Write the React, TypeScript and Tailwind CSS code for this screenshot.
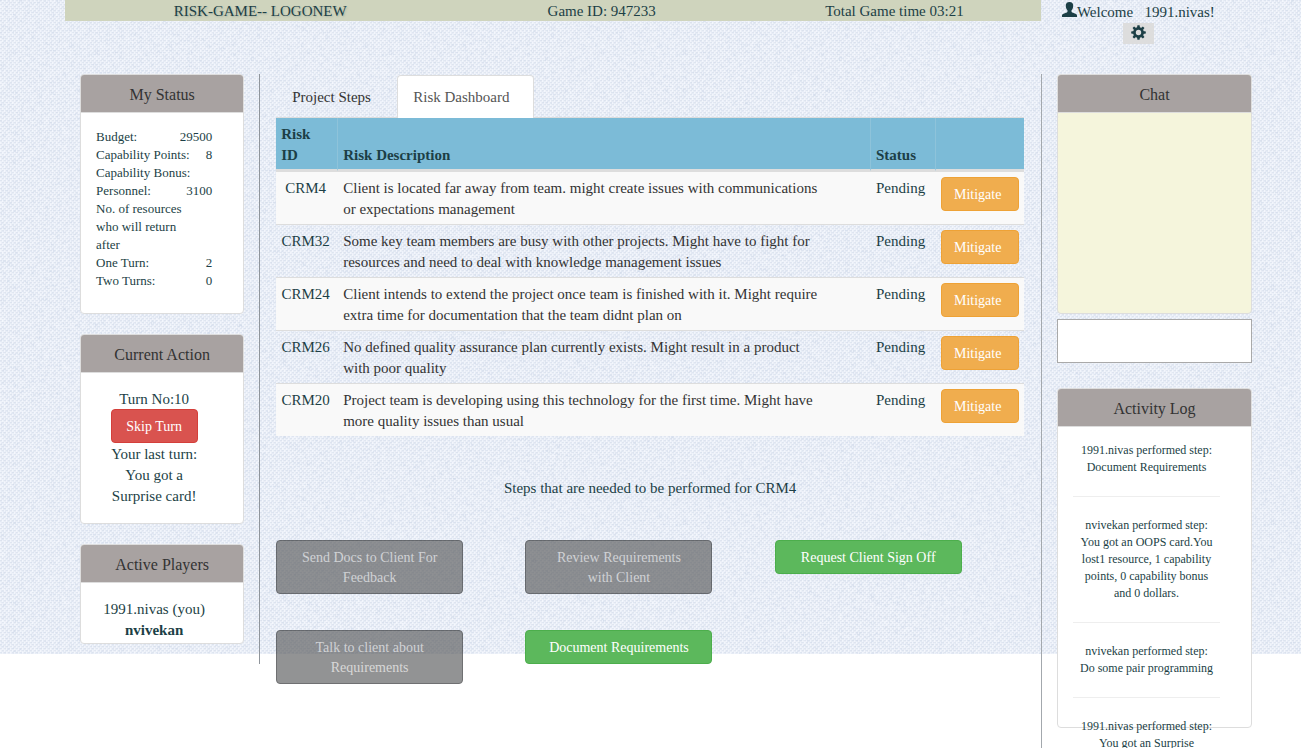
import type { ReactNode } from "react";

const risks: { id: string; lines: [string, string] }[] = [
  { id: "CRM4", lines: ["Client is located far away from team. might create issues with communications", "or expectations management"] },
  { id: "CRM32", lines: ["Some key team members are busy with other projects. Might have to fight for", "resources and need to deal with knowledge management issues"] },
  { id: "CRM24", lines: ["Client intends to extend the project once team is finished with it. Might require", "extra time for documentation that the team didnt plan on"] },
  { id: "CRM26", lines: ["No defined quality assurance plan currently exists. Might result in a product", "with poor quality"] },
  { id: "CRM20", lines: ["Project team is developing using this technology for the first time. Might have", "more quality issues than usual"] },
];

const steps: { lines: string[]; enabled: boolean }[] = [
  { lines: ["Send Docs to Client For", "Feedback"], enabled: false },
  { lines: ["Review Requirements", "with Client"], enabled: false },
  { lines: ["Request Client Sign Off"], enabled: true },
  { lines: ["Talk to client about", "Requirements"], enabled: false },
  { lines: ["Document Requirements"], enabled: true },
];

const log: string[][] = [
  ["1991.nivas performed step:", "Document Requirements"],
  ["nvivekan performed step:", "You got an OOPS card.You", "lost1 resource, 1 capability", "points, 0 capability bonus", "and 0 dollars."],
  ["nvivekan performed step:", "Do some pair programming"],
  ["1991.nivas performed step:", "You got an Surprise"],
];

function Lines({ lines }: { lines: string[] }) {
  return (
    <>
      {lines.map((line) => (
        <span key={line} className="block whitespace-nowrap">{line}</span>
      ))}
    </>
  );
}

function Linen() {
  return (
    <svg aria-hidden="true" className="absolute inset-x-0 top-0 -z-10 h-[654px] w-full">
      <defs>
        <filter id="weave" x="0" y="0" width="100%" height="100%" colorInterpolationFilters="sRGB">
          <feTurbulence type="fractalNoise" baseFrequency="0.16 0.5" numOctaves="2" seed="4" result="across" />
          <feColorMatrix in="across" type="matrix" values="0 0 0 0 0.76  0 0 0 0 0.81  0 0 0 0 0.89  1.2 0 0 0 -0.5" result="a" />
          <feTurbulence type="fractalNoise" baseFrequency="0.5 0.16" numOctaves="2" seed="9" result="down" />
          <feColorMatrix in="down" type="matrix" values="0 0 0 0 0.97  0 0 0 0 0.98  0 0 0 0 1  1.2 0 0 0 -0.4" result="b" />
          <feMerge>
            <feMergeNode in="a" />
            <feMergeNode in="b" />
          </feMerge>
        </filter>
        <pattern id="threads" width="4" height="4" patternUnits="userSpaceOnUse">
          <path d="M0 0H2V1H0ZM2 2H4V3H2Z" fill="#d3dbe9" fillOpacity="0.5" />
          <path d="M2 0H3V2H2ZM0 2H1V4H0Z" fill="#f8faff" fillOpacity="0.6" />
        </pattern>
        <pattern id="linen" width="294" height="235" patternUnits="userSpaceOnUse">
          <rect width="294" height="235" fill="#e8edf6" />
          <rect width="294" height="235" filter="url(#weave)" />
        </pattern>
      </defs>
      <rect width="100%" height="100%" fill="url(#linen)" />
      <rect width="100%" height="100%" fill="url(#threads)" />
    </svg>
  );
}

function UserIcon() {
  return (
    <svg aria-hidden="true" viewBox="0 0 15 15" className="h-[15px] w-[15px] fill-[#1c3f46]">
      <path d="M7.5 0C10 0 11.3 1.6 11.2 3.9 11.1 6 10.3 7.4 9.5 8.3V9.6C9.5 10.3 10.4 10.7 12.2 11.3 14.2 12 15 12.4 15 13.6V15H0V13.6C0 12.4.8 12 2.8 11.3 4.6 10.7 5.5 10.3 5.5 9.6V8.3C4.7 7.4 3.9 6 3.8 3.9 3.7 1.6 5 0 7.5 0Z" />
    </svg>
  );
}

function CogIcon() {
  return (
    <svg aria-hidden="true" viewBox="-7.5 -7.5 15 15" className="h-[15px] w-[15px] fill-[#1c3f46]">
      <path fillRule="evenodd" d="M0-5.4A5.4 5.4 0 1 1 0 5.4 5.4 5.4 0 1 1 0-5.4ZM0-2.7A2.7 2.7 0 1 0 0 2.7 2.7 2.7 0 1 0 0-2.7Z" />
      {[0, 45, 90, 135, 180, 225, 270, 315].map((a) => (
        <path key={a} transform={`rotate(${a})`} d="M-1.1-7.3H1.1L1.5-4.6H-1.5Z" />
      ))}
    </svg>
  );
}

function Panel({ title, size, tint = "bg-white", children }: { title: string; size: string; tint?: string; children?: ReactNode }) {
  return (
    <section className={`rounded border border-[#ddd] ${tint} ${size}`}>
      <h3 className="rounded-t-[3px] border-b border-[#ddd] bg-[#a8a2a1] pt-[11px] pb-[9px] text-center text-base leading-[17px] text-[#333]">{title}</h3>
      {children}
    </section>
  );
}

function Stat({ label, value }: { label: string; value?: string }) {
  return (
    <div className="flex justify-between">
      <dt>{label}</dt>
      <dd>{value}</dd>
    </div>
  );
}

export default function App() {
  return (
    <div className="relative isolate font-['Liberation_Serif',serif] text-[15px] leading-[21px] text-[#1c3f46]">
      <Linen />

      <header className="mx-[5%] flex h-[74px] items-start text-center">
        <h1 className="w-1/3 bg-[#cfd4bd] pt-px leading-5 [text-shadow:1px_1px_2px_#a9b3a2]">RISK-GAME-- LOGONEW</h1>
        <p className="w-1/4 bg-[#cfd4bd] pt-px leading-5">Game ID: 947233</p>
        <p className="w-1/4 bg-[#cfd4bd] pt-px leading-5">Total Game time 03:21</p>
        <div className="flex w-1/6 flex-col items-center pt-[2px]">
          <p className="flex items-start">
            <UserIcon />
            <span>Welcome&nbsp;&nbsp; 1991.nivas!</span>
          </p>
          <button type="button" aria-label="Settings" className="flex h-[21px] w-[31px] items-start justify-center bg-[#ddd] pt-[2px]">
            <CogIcon />
          </button>
        </div>
      </header>

      <main className="ml-[5%] flex items-start">
        <aside className="flex w-[15.79%] shrink-0 flex-col gap-5 border-r border-[#8f959b] px-[15px] pb-5">
          <Panel title="My Status" size="h-60">
            <dl className="py-[15px] pr-[31px] pl-[15px] text-[13px] leading-[18px]">
              <Stat label="Budget:" value="29500" />
              <Stat label="Capability Points:" value="8" />
              <Stat label="Capability Bonus:" />
              <Stat label="Personnel:" value="3100" />
              <div>
                <Lines lines={["No. of resources", "who will return", "after"]} />
              </div>
              <Stat label="One Turn:" value="2" />
              <Stat label="Two Turns:" value="0" />
            </dl>
          </Panel>
          <Panel title="Current Action" size="h-[190px]">
            <div className="flex flex-col items-center pt-4 pr-[31px] pl-[15px] text-center">
              <p className="leading-5">Turn No:10</p>
              <button type="button" className="h-[34px] w-[87px] rounded border border-[#d43f3a] bg-[#d9534f] pt-px text-sm text-white">Skip Turn</button>
              <p className="pt-px">
                <Lines lines={["Your last turn:", "You got a", "Surprise card!"]} />
              </p>
            </div>
          </Panel>
          <Panel title="Active Players" size="h-[100px]">
            <ul className="pt-4 pr-[31px] pl-[15px] text-center">
              <li className="whitespace-nowrap">1991.nivas (you)</li>
              <li className="font-bold">nvivekan</li>
            </ul>
          </Panel>
        </aside>

        <div className="min-w-0 flex-1 pr-[17px] pl-4">
          <nav className="flex h-11 items-end border-b border-[#ddd]">
            <a href="#steps" className="mr-[2px] w-[119px] px-4 pt-3 pb-[9px] whitespace-nowrap text-[#333]">Project Steps</a>
            <a href="#risks" className="-mb-px w-[137px] rounded-t border border-b-0 border-[#ddd] bg-white px-[15px] pt-[11px] pb-[10px] whitespace-nowrap text-[#555]">Risk Dashboard</a>
          </nav>
          <table id="risks" className="w-full table-fixed border-separate border-spacing-0">
            <colgroup>
              <col className="w-[62px]" />
              <col />
              <col className="w-[65px]" />
              <col className="w-[88px]" />
            </colgroup>
            <thead>
              <tr className="bg-[#7cbbd7] text-left align-bottom">
                <th className="border-r border-b-2 border-r-[#8ec3da] border-b-[#ddd] px-[5px] pt-[6px] pb-[3px]">Risk<br />ID</th>
                <th className="border-r border-b-2 border-r-[#8ec3da] border-b-[#ddd] px-[5px] pt-[6px] pb-[3px]">Risk Description</th>
                <th className="border-r border-b-2 border-r-[#8ec3da] border-b-[#ddd] px-[5px] pt-[6px] pb-[3px]">Status</th>
                <th aria-label="Action" className="border-b-2 border-b-[#ddd]" />
              </tr>
            </thead>
            <tbody>
              {risks.map((risk) => (
                <tr key={risk.id} className="align-top odd:bg-[#f9f9f9]">
                  <td className="border-t border-[#ddd] pt-[6px] pr-[3px] pb-1 text-center">{risk.id}</td>
                  <td className="border-t border-[#ddd] px-[5px] pt-[6px] pb-1 text-[#333]"><Lines lines={risk.lines} /></td>
                  <td className="border-t border-[#ddd] px-[5px] pt-[6px] pb-1">Pending</td>
                  <td className="border-t border-[#ddd] p-[5px]">
                    <button type="button" className="block h-[34px] w-full rounded border border-[#eea236] bg-[#f0ad4e] pt-px pl-3 text-left text-sm text-white">Mitigate</button>
                  </td>
                </tr>
              ))}
            </tbody>
          </table>
          <p className="mt-[42px] text-center">Steps that are needed to be performed for CRM4</p>
          <div id="steps" className="mt-[41px] grid grid-cols-3 items-start gap-y-9">
            {steps.map((step) => (
              <button
                key={step.lines[0]}
                type="button"
                disabled={!step.enabled}
                className="w-3/4 rounded border border-[#4cae4c] bg-[#5cb85c] pt-[7px] pb-[5px] text-sm leading-5 text-white disabled:border-[#232527] disabled:bg-[#595a5b] disabled:text-[#c4c4c4] disabled:opacity-65"
              >
                <Lines lines={step.lines} />
              </button>
            ))}
          </div>
        </div>

        <aside className="mr-[49px] w-[211px] shrink-0 border-l border-[#a3a8ad] pb-5 pl-[15px]">
          <Panel title="Chat" size="h-60" tint="bg-[#f5f5dc]" />
          <textarea aria-label="Chat message" className="mt-[5px] block h-11 w-full resize-none border border-[#a9a9a9] bg-white" />
          <div className="mt-[25px]">
            <Panel title="Activity Log" size="h-[340px]">
              <ol className="mr-[31px] ml-[15px] pt-[15px] text-center text-xs leading-[17px]">
                {log.map((entry, i) => (
                  <li key={i} className="mb-5 border-b border-[#eee] pb-5 last:mb-0 last:border-0 last:pb-0">
                    <Lines lines={entry} />
                  </li>
                ))}
              </ol>
            </Panel>
          </div>
        </aside>
      </main>
    </div>
  );
}
